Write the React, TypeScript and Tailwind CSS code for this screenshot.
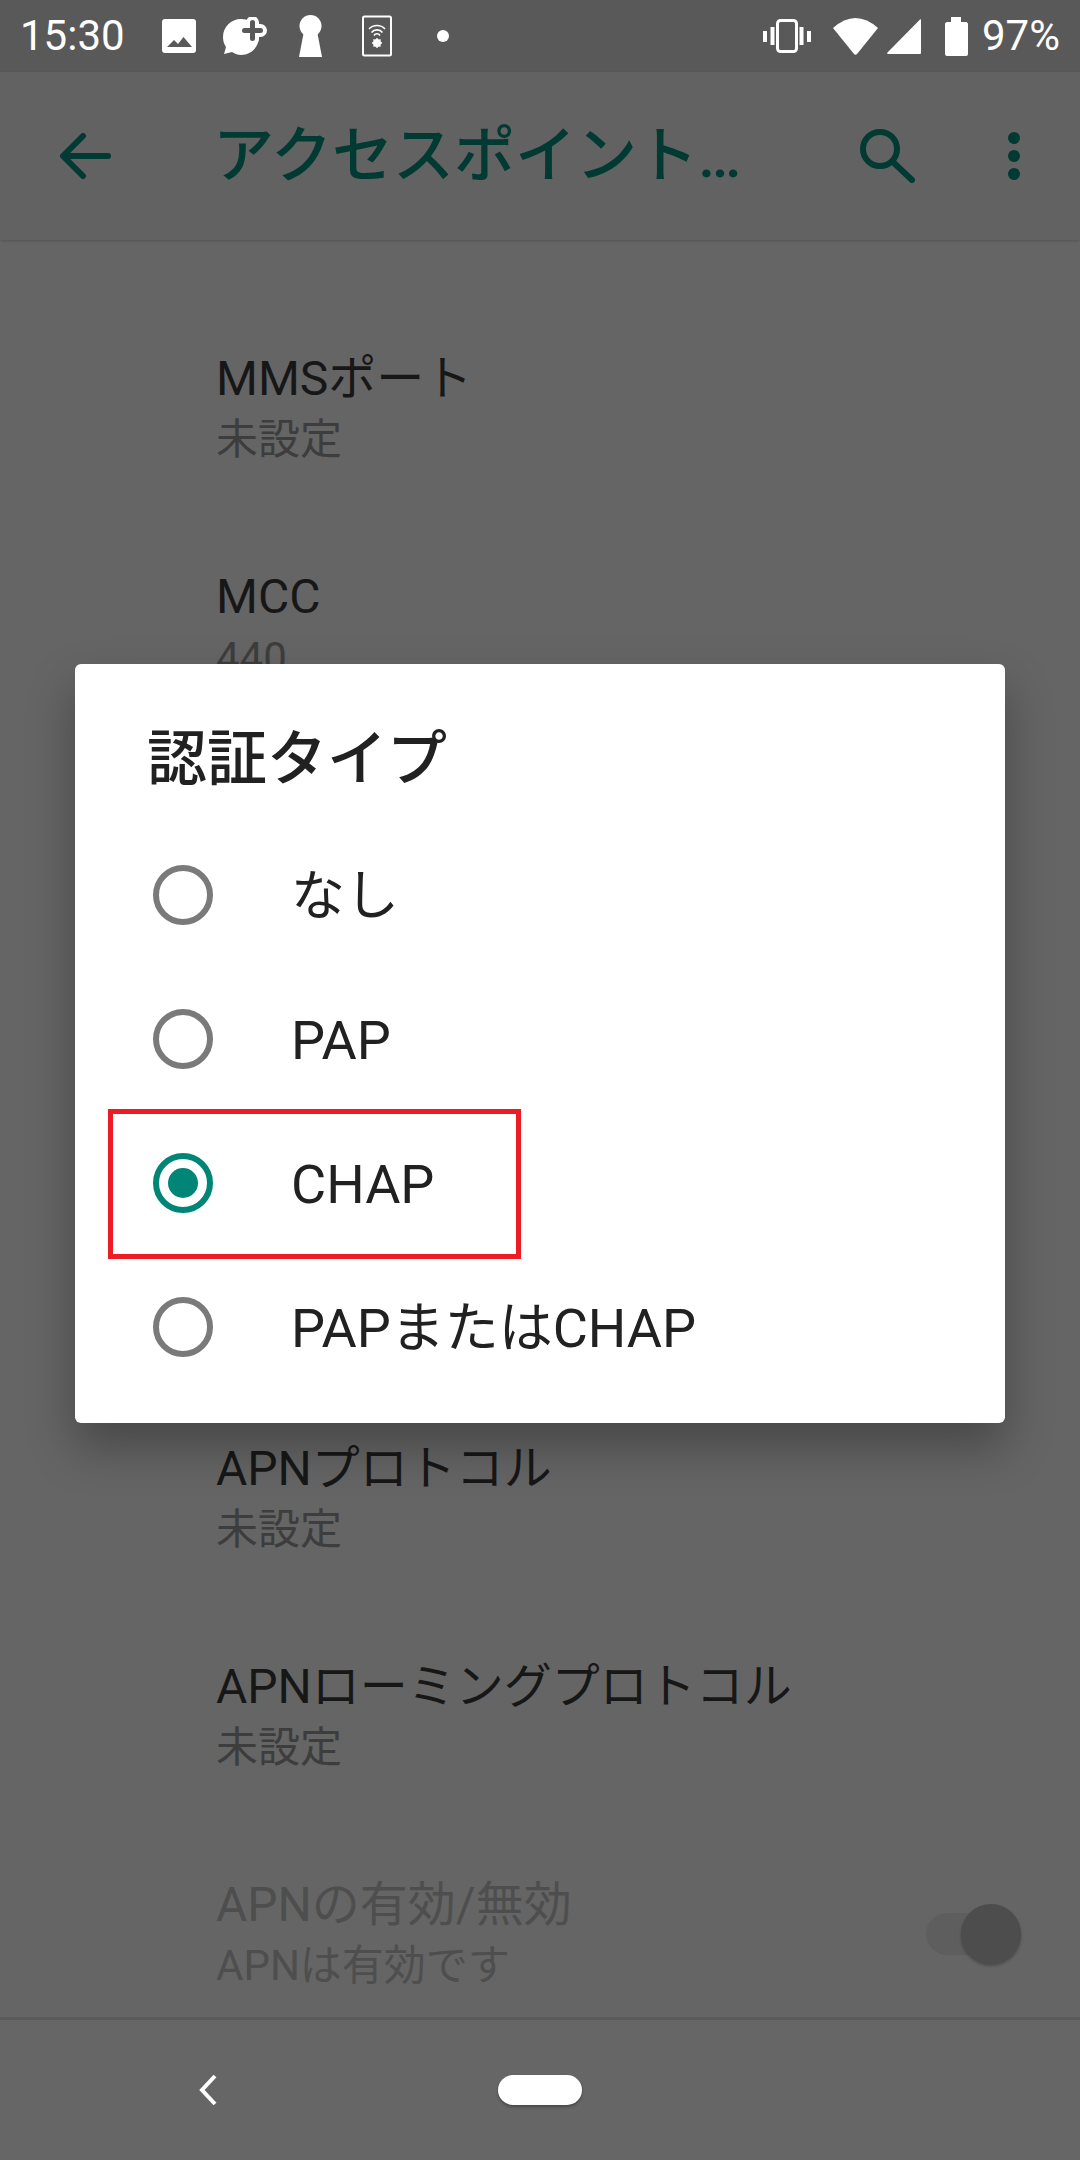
import React from 'react';

const font = { fontFamily: 'Roboto, "Noto Sans CJK JP", sans-serif' };

const settings = [
  { title: 'MMSプロキシ', value: '未設定' },
  { title: 'MMSポート', value: '未設定' },
  { title: 'MCC', value: '440' },
  { title: 'MNC', value: '10' },
  { title: '認証タイプ', value: 'CHAP' },
  { title: 'APNタイプ', value: '未設定' },
  { title: 'APNプロトコル', value: '未設定' },
  { title: 'APNローミングプロトコル', value: '未設定' },
];

const options = ['なし', 'PAP', 'CHAP', 'PAPまたはCHAP'];

function StatusLeft() {
  return (
    <div className="flex items-center">
      <span className="ml-[20px] w-[103px] text-[42px] leading-none text-white">15:30</span>
      <svg className="ml-[39px]" width="34" height="34" viewBox="0 0 34 34">
        <rect width="34" height="34" rx="3" fill="#fff" />
        <path d="M5 28 12 21 16 25 21.500 18 30 28Z" fill="#595959" />
      </svg>
      <svg className="ml-[27px]" width="44" height="38" viewBox="0 0 44 38">
        <path d="M18 2C8 2 0 10 0 20c0 4 1 7 3 10L1 37l8-2c3 2 6 3 9 3 10 0 18-8 18-18S28 2 18 2Z" fill="#fff" />
        <path d="M21.500 13.500h16M29.500 5.500v16" stroke="#fff" strokeWidth="13" strokeLinecap="round" />
        <path d="M21.500 13.500h16M29.500 5.500v16" stroke="#595959" strokeWidth="5" strokeLinecap="round" />
      </svg>
      <svg className="ml-[32px]" width="23" height="42" viewBox="0 0 23 42" fill="#fff">
        <circle cx="11.500" cy="11" r="11" />
        <path d="M5 16h13l5 26H0Z" />
      </svg>
      <svg className="ml-[40px]" width="30" height="42" viewBox="0 0 30 42" fill="none" stroke="#fff">
        <rect x="1" y="1.500" width="28" height="39" rx="1.500" strokeWidth="2" />
        <path d="M7 14a11 11 0 0 1 16 0M9.500 17.500a7 7 0 0 1 11 0M12 20.500a3.500 3.500 0 0 1 6 0" strokeWidth="1.600" />
        <circle cx="15" cy="28" r="2.800" strokeWidth="2.400" />
        <path d="M15 23v10M10 28h10M11.500 24.500l7 7M18.500 24.500l-7 7" strokeWidth="1.400" />
      </svg>
      <span className="ml-[45px] size-[12px] rounded-full bg-white" />
    </div>
  );
}

function StatusRight() {
  return (
    <div className="flex items-center">
      <svg width="48" height="34" viewBox="0 0 48 34" fill="none" stroke="#fff">
        <rect x="14.500" y="1.500" width="19" height="31" rx="3" strokeWidth="3" />
        <path d="M9.500 8v18M38.500 8v18" strokeWidth="4" />
        <path d="M2 12v11M46 12v11" strokeWidth="4" />
      </svg>
      <svg className="ml-[22px]" width="45" height="37" viewBox="0 0 45 37" fill="#fff">
        <path d="M0 10Q22.500-10 45 10L24 36Q22.500 37.500 21 36Z" />
      </svg>
      <svg className="ml-[9px]" width="34" height="35" viewBox="0 0 34 35" fill="#fff">
        <path d="M34 1v33c0 .5-.5 1-1 1H1c-1 0-1-1-.5-1.500L33 .500c.5-.5 1-.5 1 .5Z" />
      </svg>
      <svg className="ml-[24px]" width="23" height="39" viewBox="0 0 23 39" fill="#fff">
        <path d="M6 0h10v5h5c1 0 2 1 2 2v30c0 1-1 2-2 2H2c-1 0-2-1-2-2V7c0-1 1-2 2-2h4Z" />
      </svg>
      <span className="ml-[14px] mr-[20px] text-[42px] leading-none text-white">97%</span>
    </div>
  );
}

function SettingRow({ title, value }: { title: string; value: string }) {
  return (
    <div className="flex h-[218px] flex-col justify-center pl-[216px]">
      <div className="text-[48px] leading-[64px] text-[#171717]">{title}</div>
      <div className="text-[42px] leading-[58px] text-[#3d3d3d]">{value}</div>
    </div>
  );
}

function Radio({ checked }: { checked: boolean }) {
  if (checked) {
    return (
      <span className="flex size-[60px] items-center justify-center rounded-full border-[6px] border-[#008577]">
        <span className="size-[30px] rounded-full bg-[#008577]" />
      </span>
    );
  }
  return <span className="size-[60px] rounded-full border-[6px] border-[#7a7a7a]" />;
}

export default function App() {
  return (
    <div className="relative flex h-[2160px] w-[1080px] flex-col overflow-hidden bg-[#656565]" style={font}>
      {/* Status bar */}
      <div className="z-10 flex h-[72px] shrink-0 items-center justify-between bg-[#595959]">
        <StatusLeft />
        <StatusRight />
      </div>

      {/* Toolbar */}
      <header className="z-10 flex h-[168px] shrink-0 items-center bg-[#626262] shadow-[0_1px_3px_rgba(0,0,0,0.18)]">
        <svg className="ml-[60px]" width="51" height="46" viewBox="0 0 51 46" fill="none" stroke="#003a33" strokeWidth="6" strokeLinecap="round" strokeLinejoin="round">
          <path d="M48 23H4M23 3 3 23l20 20" />
        </svg>
        <h1 className="ml-[102px] w-[535px] truncate text-[61px] font-medium leading-[80px] text-[#003a33]">アクセスポイントの編集</h1>
        <svg className="ml-[112px]" width="55" height="54" viewBox="0 0 55 54" fill="none" stroke="#003a33" strokeLinecap="round">
          <circle cx="20" cy="20" r="17" strokeWidth="6" />
          <path d="M34 34 52 51" strokeWidth="6" />
        </svg>
        <svg className="ml-[93px]" width="12" height="48" viewBox="0 0 12 48" fill="#003a33">
          <circle cx="6" cy="6" r="6" />
          <circle cx="6" cy="24" r="6" />
          <circle cx="6" cy="42" r="6" />
        </svg>
      </header>

      {/* List under the dialog */}
      <main className="min-h-0 flex-1 overflow-hidden">
        <div className="-mt-[159px]">
          {settings.map((s) => (
            <SettingRow key={s.title} title={s.title} value={s.value} />
          ))}
          <div className="flex h-[218px] items-center pl-[216px] pr-[80px]">
            <div className="flex-1">
              <div className="text-[48px] leading-[64px] text-[#4e4e4e]">APNの有効/無効</div>
              <div className="text-[42px] leading-[58px] text-[#4e4e4e]">APNは有効です</div>
            </div>
            <div className="relative h-[42px] w-[74px] rounded-full bg-[#5e5e5e]">
              <span className="absolute -right-[21px] -top-[9px] size-[60px] rounded-full bg-[#4d4d4d] shadow-[0_2px_3px_rgba(0,0,0,0.25)]" />
            </div>
          </div>
        </div>
      </main>

      {/* Navigation bar */}
      <nav className="z-10 flex h-[143px] shrink-0 items-center border-t-[3px] border-[#5a5a5a] bg-[#666666]">
        <svg className="ml-[198px]" width="20" height="32" viewBox="0 0 20 32" fill="none" stroke="#fff" strokeWidth="4">
          <path d="M17 2 4 16l13 14" />
        </svg>
        <span className="ml-[280px] h-[30px] w-[84px] rounded-[15px] bg-white shadow-[0_2px_3px_rgba(0,0,0,0.3)]" />
      </nav>

      {/* Dialog */}
      <div className="absolute left-[75px] top-[664px] z-20 w-[930px] rounded-[6px] bg-white pb-[24px] pt-[65px] shadow-[0_24px_48px_rgba(0,0,0,0.3)]">
        <h2 className="pl-[72px] text-[60px] font-medium leading-[62px] text-[#212121]">認証タイプ</h2>
        <ul className="mt-[32px]">
          {options.map((o) => (
            <li key={o} className="flex h-[144px] items-center pl-[78px]">
              <Radio checked={o === 'CHAP'} />
              <span className="ml-[78px] pt-[3px] text-[54px] leading-[72px] text-[#212121]">{o}</span>
            </li>
          ))}
        </ul>
      </div>

      {/* Red annotation */}
      <div className="absolute left-[108px] top-[1109px] z-30 h-[150px] w-[413px] border-[5px] border-[#ed1c24]" />
    </div>
  );
}
